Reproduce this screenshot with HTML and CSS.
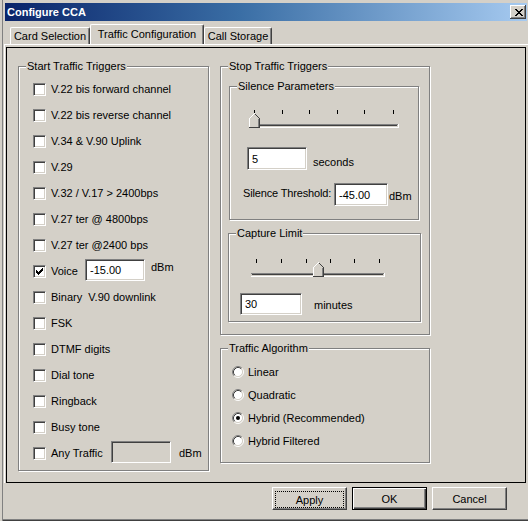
FILE: index.html
```html
<!DOCTYPE html>
<html>
<head>
<meta charset="utf-8">
<title>Configure CCA</title>
<link rel="stylesheet" href="styles.css">
</head>
<body>
<div class="window">
  <div class="titlebar">
    <span class="title">Configure CCA</span>
    <span class="close">
      <svg width="8" height="7" viewBox="0 0 8 7" shape-rendering="crispEdges">
        <rect x="0" y="0" width="2" height="1"/><rect x="6" y="0" width="2" height="1"/>
        <rect x="1" y="1" width="2" height="1"/><rect x="5" y="1" width="2" height="1"/>
        <rect x="2" y="2" width="4" height="1"/>
        <rect x="3" y="3" width="2" height="1"/>
        <rect x="2" y="4" width="4" height="1"/>
        <rect x="1" y="5" width="2" height="1"/><rect x="5" y="5" width="2" height="1"/>
        <rect x="0" y="6" width="2" height="1"/><rect x="6" y="6" width="2" height="1"/>
      </svg>
    </span>
  </div>

  <div class="tabs">
    <div class="tab tab-card">Card Selection</div>
    <div class="tab tab-active tab-traffic">Traffic Configuration</div>
    <div class="tab tab-call">Call Storage</div>
  </div>

  <div class="pane">
    <div class="page">
      <div class="group group-start">
        <div class="group-title">Start Traffic Triggers</div>
        <div class="checklist">
          <div class="row"><span class="check"></span><span class="label">V.22 bis forward channel</span></div>
          <div class="row"><span class="check"></span><span class="label">V.22 bis reverse channel</span></div>
          <div class="row"><span class="check"></span><span class="label">V.34 &amp; V.90 Uplink</span></div>
          <div class="row"><span class="check"></span><span class="label">V.29</span></div>
          <div class="row"><span class="check"></span><span class="label">V.32 / V.17 &gt; 2400bps</span></div>
          <div class="row"><span class="check"></span><span class="label">V.27 ter @ 4800bps</span></div>
          <div class="row"><span class="check"></span><span class="label">V.27 ter @2400 bps</span></div>
          <div class="row">
            <span class="check"><svg width="7" height="7" viewBox="0 0 7 7" shape-rendering="crispEdges"><polygon points="0,2 1,2 1,3 2,3 2,4 3,4 3,3 4,3 4,2 5,2 5,1 6,1 6,0 7,0 7,3 6,3 6,4 5,4 5,5 4,5 4,6 3,6 3,7 2,7 2,6 1,6 1,5 0,5"/></svg></span>
            <span class="label label-voice">Voice</span>
            <input class="field field-voice" type="text" value="-15.00">
            <span class="unit unit-voice">dBm</span>
          </div>
          <div class="row"><span class="check"></span><span class="label">Binary&nbsp; V.90 downlink</span></div>
          <div class="row"><span class="check"></span><span class="label">FSK</span></div>
          <div class="row"><span class="check"></span><span class="label">DTMF digits</span></div>
          <div class="row"><span class="check"></span><span class="label">Dial tone</span></div>
          <div class="row"><span class="check"></span><span class="label">Ringback</span></div>
          <div class="row"><span class="check"></span><span class="label">Busy tone</span></div>
          <div class="row">
            <span class="check"></span>
            <span class="label label-any">Any Traffic</span>
            <input class="field field-any" type="text" value="" disabled>
            <span class="unit unit-any">dBm</span>
          </div>
        </div>
      </div>

      <div class="rightcol">
        <div class="group group-stop">
          <div class="group-title">Stop Traffic Triggers</div>

          <div class="group group-silence">
            <div class="group-title">Silence Parameters</div>
            <svg class="slider slider-silence" width="151" height="18" viewBox="0 0 151 18" shape-rendering="crispEdges">
              <g fill="#000">
                <rect x="5" y="0" width="1" height="4"/><rect x="33" y="0" width="1" height="4"/>
                <rect x="60" y="0" width="1" height="4"/><rect x="88" y="0" width="1" height="4"/>
                <rect x="115" y="0" width="1" height="4"/><rect x="144" y="0" width="1" height="4"/>
              </g>
              <rect x="0" y="14" width="149" height="1" fill="#808080"/>
              <rect x="1" y="15" width="147" height="1" fill="#404040"/>
              <rect x="1" y="16" width="147" height="1" fill="#d4d0c8"/>
              <rect x="0" y="17" width="150" height="1" fill="#fff"/>
              <rect x="149" y="14" width="1" height="4" fill="#fff"/>
              <g transform="translate(0,0)">
                <polygon points="0,8 5,3 6,3 11,8 11,18 0,18" fill="#d4d0c8"/>
                <rect x="0" y="8" width="1" height="10" fill="#fff"/>
                <rect x="1" y="7" width="1" height="1" fill="#fff"/><rect x="2" y="6" width="1" height="1" fill="#fff"/>
                <rect x="3" y="5" width="1" height="1" fill="#fff"/><rect x="4" y="4" width="1" height="1" fill="#fff"/>
                <rect x="5" y="3" width="1" height="1" fill="#fff"/>
                <rect x="6" y="4" width="1" height="1" fill="#404040"/><rect x="7" y="5" width="1" height="1" fill="#404040"/>
                <rect x="8" y="6" width="1" height="1" fill="#404040"/><rect x="9" y="7" width="1" height="1" fill="#404040"/>
                <rect x="10" y="8" width="1" height="10" fill="#404040"/>
                <rect x="9" y="9" width="1" height="8" fill="#808080"/>
                <rect x="0" y="17" width="11" height="1" fill="#404040"/>
              </g>
            </svg>
            <div class="frow frow-seconds">
              <input class="field field-seconds" type="text" value="5">
              <span class="unit unit-seconds">seconds</span>
            </div>
            <div class="frow frow-threshold">
              <span class="label label-threshold">Silence Threshold:</span>
              <input class="field field-threshold" type="text" value="-45.00">
              <span class="unit unit-threshold">dBm</span>
            </div>
          </div>

          <div class="group group-capture">
            <div class="group-title">Capture Limit</div>
            <svg class="slider slider-capture" width="135" height="18" viewBox="0 0 135 18" shape-rendering="crispEdges">
              <g fill="#000">
                <rect x="5" y="0" width="1" height="4"/><rect x="30" y="0" width="1" height="4"/>
                <rect x="55" y="0" width="1" height="4"/><rect x="79" y="0" width="1" height="4"/>
                <rect x="103" y="0" width="1" height="4"/><rect x="128" y="0" width="1" height="4"/>
              </g>
              <rect x="0" y="14" width="133" height="1" fill="#808080"/>
              <rect x="1" y="15" width="131" height="1" fill="#404040"/>
              <rect x="1" y="16" width="131" height="1" fill="#d4d0c8"/>
              <rect x="0" y="17" width="134" height="1" fill="#fff"/>
              <rect x="133" y="14" width="1" height="4" fill="#fff"/>
              <g transform="translate(62,0)">
                <polygon points="0,8 5,3 6,3 11,8 11,18 0,18" fill="#d4d0c8"/>
                <rect x="0" y="8" width="1" height="10" fill="#fff"/>
                <rect x="1" y="7" width="1" height="1" fill="#fff"/><rect x="2" y="6" width="1" height="1" fill="#fff"/>
                <rect x="3" y="5" width="1" height="1" fill="#fff"/><rect x="4" y="4" width="1" height="1" fill="#fff"/>
                <rect x="5" y="3" width="1" height="1" fill="#fff"/>
                <rect x="6" y="4" width="1" height="1" fill="#404040"/><rect x="7" y="5" width="1" height="1" fill="#404040"/>
                <rect x="8" y="6" width="1" height="1" fill="#404040"/><rect x="9" y="7" width="1" height="1" fill="#404040"/>
                <rect x="10" y="8" width="1" height="10" fill="#404040"/>
                <rect x="9" y="9" width="1" height="8" fill="#808080"/>
                <rect x="0" y="17" width="11" height="1" fill="#404040"/>
              </g>
            </svg>
            <div class="frow frow-minutes">
              <input class="field field-minutes" type="text" value="30">
              <span class="unit unit-minutes">minutes</span>
            </div>
          </div>
        </div>

        <div class="group group-algo">
          <div class="group-title">Traffic Algorithm</div>
          <div class="radiolist">
            <div class="rrow">
              <svg class="radio" width="12" height="12" viewBox="0 0 12 12">
                <circle cx="6" cy="6" r="4.5" fill="#fff"/>
                <path d="M2.11 9.89 A5.5 5.5 0 0 1 9.89 2.11" fill="none" stroke="#808080"/>
                <path d="M9.89 2.11 A5.5 5.5 0 0 1 2.11 9.89" fill="none" stroke="#fff"/>
                <path d="M2.82 9.18 A4.5 4.5 0 0 1 9.18 2.82" fill="none" stroke="#404040"/>
                <path d="M9.18 2.82 A4.5 4.5 0 0 1 2.82 9.18" fill="none" stroke="#d4d0c8"/>
              </svg>
              <span class="label">Linear</span>
            </div>
            <div class="rrow">
              <svg class="radio" width="12" height="12" viewBox="0 0 12 12">
                <circle cx="6" cy="6" r="4.5" fill="#fff"/>
                <path d="M2.11 9.89 A5.5 5.5 0 0 1 9.89 2.11" fill="none" stroke="#808080"/>
                <path d="M9.89 2.11 A5.5 5.5 0 0 1 2.11 9.89" fill="none" stroke="#fff"/>
                <path d="M2.82 9.18 A4.5 4.5 0 0 1 9.18 2.82" fill="none" stroke="#404040"/>
                <path d="M9.18 2.82 A4.5 4.5 0 0 1 2.82 9.18" fill="none" stroke="#d4d0c8"/>
              </svg>
              <span class="label">Quadratic</span>
            </div>
            <div class="rrow">
              <svg class="radio" width="12" height="12" viewBox="0 0 12 12">
                <circle cx="6" cy="6" r="4.5" fill="#fff"/>
                <path d="M2.11 9.89 A5.5 5.5 0 0 1 9.89 2.11" fill="none" stroke="#808080"/>
                <path d="M9.89 2.11 A5.5 5.5 0 0 1 2.11 9.89" fill="none" stroke="#fff"/>
                <path d="M2.82 9.18 A4.5 4.5 0 0 1 9.18 2.82" fill="none" stroke="#404040"/>
                <path d="M9.18 2.82 A4.5 4.5 0 0 1 2.82 9.18" fill="none" stroke="#d4d0c8"/>
                <circle cx="6" cy="6" r="2" fill="#000"/>
              </svg>
              <span class="label">Hybrid (Recommended)</span>
            </div>
            <div class="rrow">
              <svg class="radio" width="12" height="12" viewBox="0 0 12 12">
                <circle cx="6" cy="6" r="4.5" fill="#fff"/>
                <path d="M2.11 9.89 A5.5 5.5 0 0 1 9.89 2.11" fill="none" stroke="#808080"/>
                <path d="M9.89 2.11 A5.5 5.5 0 0 1 2.11 9.89" fill="none" stroke="#fff"/>
                <path d="M2.82 9.18 A4.5 4.5 0 0 1 9.18 2.82" fill="none" stroke="#404040"/>
                <path d="M9.18 2.82 A4.5 4.5 0 0 1 2.82 9.18" fill="none" stroke="#d4d0c8"/>
              </svg>
              <span class="label">Hybrid Filtered</span>
            </div>
          </div>
        </div>
      </div>
    </div>
  </div>

  <div class="buttons">
    <button class="btn btn-focus"><span class="focusrect">Apply</span></button>
    <button class="btn btn-default">OK</button>
    <button class="btn">Cancel</button>
  </div>
</div>
</body>
</html>
```

FILE: styles.css
```css
* { box-sizing: border-box; }

html, body {
  margin: 0;
  padding: 0;
}

body {
  width: 528px;
  height: 521px;
  overflow: hidden;
  background: #d4d0c8;
  font-family: "Liberation Sans", Arial, sans-serif;
  font-size: 11px;
  color: #000;
}

.window {
  height: 521px;
  padding-top: 3px;
  border-left: 2px solid #d4d0c8;
  background: #d4d0c8;
  box-shadow: inset 1px 0 0 #808080, inset 0 -1px 0 #404040, inset 0 -2px 0 #808080;
}

/* Title bar */
.titlebar {
  height: 18px;
  margin: 0 1px 0 3px;
  padding: 0 1px 0 2px;
  display: flex;
  align-items: center;
  justify-content: space-between;
  background: linear-gradient(to right, #0a246a 0%, #3a6ea5 45%, #a6caf0 100%);
  color: #fff;
  font-weight: bold;
}

.title { line-height: 13px; }

.close {
  width: 16px;
  height: 14px;
  display: flex;
  align-items: center;
  justify-content: center;
  background: #d4d0c8;
  box-shadow: inset -1px -1px 0 #404040, inset 1px 1px 0 #fff, inset -2px -2px 0 #808080;
}

.close svg { display: block; fill: #000; margin-left: 1px; }

/* Tabs */
.tabs {
  height: 23px;
  margin-left: 8px;
  display: flex;
  align-items: flex-end;
}

.tab {
  height: 17px;
  display: flex;
  align-items: center;
  justify-content: center;
  border-top: 1px solid #fff;
  border-left: 1px solid #fff;
  border-right: 1px solid #404040;
  border-radius: 2px 2px 0 0;
  box-shadow: inset -1px 0 0 #808080;
  white-space: nowrap;
}

.tab-card { width: 80px; }
.tab-traffic { width: 114px; }
.tab-call { width: 68px; }

.tab-active {
  height: 20px;
  padding-bottom: 1px;
}

/* Tab pane */
.pane {
  margin-left: 2px;
  padding: 2px 0 0 1px;
  border-top: 1px solid #fff;
  border-left: 1px solid #fff;
}

.page {
  width: 520px;
  height: 436px;
  border: 1px solid #000;
  padding: 18px 0 0 11px;
  display: flex;
  align-items: flex-start;
}

/* Group boxes */
.group {
  border: 1px solid #808080;
  box-shadow: inset 1px 1px 0 #fff, 1px 1px 0 #fff;
}

.group-title {
  width: fit-content;
  margin: -7px 0 0 7px;
  padding: 0 1px;
  line-height: 13px;
  background: #d4d0c8;
  white-space: nowrap;
}

.group-start {
  width: 191px;
  height: 405px;
}

.checklist {
  padding: 4px 0 0 14px;
}

.row {
  height: 26px;
  display: flex;
  align-items: flex-start;
}

.check {
  width: 13px;
  height: 13px;
  margin-top: 6px;
  margin-right: 5px;
  padding: 2px;
  background: #fff;
  border: 1px solid;
  border-color: #808080 #fff #fff #808080;
  box-shadow: inset 1px 1px 0 #404040, inset -1px -1px 0 #d4d0c8;
  flex: none;
}

.check svg { display: block; fill: #000; }

.label {
  line-height: 13px;
  margin-top: 6px;
  white-space: nowrap;
}

.label-voice { width: 34px; }
.label-any { width: 60px; }

.field {
  height: 22px;
  padding: 0 4px;
  margin: 0;
  font-family: "Liberation Sans", Arial, sans-serif;
  font-size: 11px;
  color: #000;
  background: #fff;
  border: 1px solid;
  border-color: #808080 #fff #fff #808080;
  box-shadow: inset 1px 1px 0 #404040, inset -1px -1px 0 #d4d0c8;
  border-radius: 0;
  outline: none;
  flex: none;
}

.field:disabled { background: #d4d0c8; }

.field-voice { width: 60px; }
.field-any { width: 60px; }

.unit {
  line-height: 13px;
  white-space: nowrap;
}

.unit-voice { margin: 2px 0 0 6px; }
.unit-any { margin: 6px 0 0 8px; }

/* Right column */
.rightcol {
  margin-left: 11px;
  display: flex;
  flex-direction: column;
}

.group-stop {
  width: 210px;
  height: 269px;
}

.group-silence {
  width: 190px;
  height: 134px;
  margin: 13px 0 0 8px;
}

.slider { display: block; }

.slider-silence { margin: 17px 0 0 19px; }

.frow {
  display: flex;
  align-items: flex-start;
}

.frow-seconds { margin: 19px 0 0 17px; }
.field-seconds { width: 60px; height: 23px; }
.unit-seconds { margin: 9px 0 0 6px; }

.frow-threshold { margin: 13px 0 0 13px; }
.label-threshold { width: 91px; margin-top: 4px; letter-spacing: -0.15px; }
.field-threshold { width: 54px; height: 23px; }
.unit-threshold { margin: 7px 0 0 1px; }

.group-capture {
  width: 193px;
  height: 89px;
  margin: 13px 0 0 7px;
}

.slider-capture { margin: 19px 0 0 22px; }

.frow-minutes { margin: 16px 0 0 11px; }
.field-minutes { width: 62px; }
.unit-minutes { margin: 6px 0 0 12px; }

.group-algo {
  width: 210px;
  height: 115px;
  margin-top: 13px;
}

.radiolist { padding: 6px 0 0 11px; }

.rrow {
  height: 23px;
  display: flex;
  align-items: flex-start;
}

.radio {
  display: block;
  margin: 5px 4px 0 0;
  flex: none;
}

.rrow .label { margin-top: 5px; }

/* Buttons */
.buttons {
  margin-top: 4px;
  padding-right: 21px;
  display: flex;
  justify-content: flex-end;
  gap: 5px;
}

.btn {
  width: 75px;
  height: 23px;
  padding: 0;
  margin: 0;
  display: flex;
  align-items: center;
  justify-content: center;
  font-family: "Liberation Sans", Arial, sans-serif;
  font-size: 11px;
  color: #000;
  background: #d4d0c8;
  border: 1px solid;
  border-color: #fff #404040 #404040 #fff;
  box-shadow: inset -1px -1px 0 #808080;
  border-radius: 0;
}

.btn-default {
  border: 1px solid #000;
  box-shadow: inset 1px 1px 0 #fff, inset -1px -1px 0 #404040, inset -2px -2px 0 #808080;
}

.btn-focus { padding: 3px 2px 1px 2px; }

.focusrect {
  flex: 1;
  align-self: stretch;
  display: flex;
  align-items: center;
  justify-content: center;
  border: 1px dotted #000;
}
```
